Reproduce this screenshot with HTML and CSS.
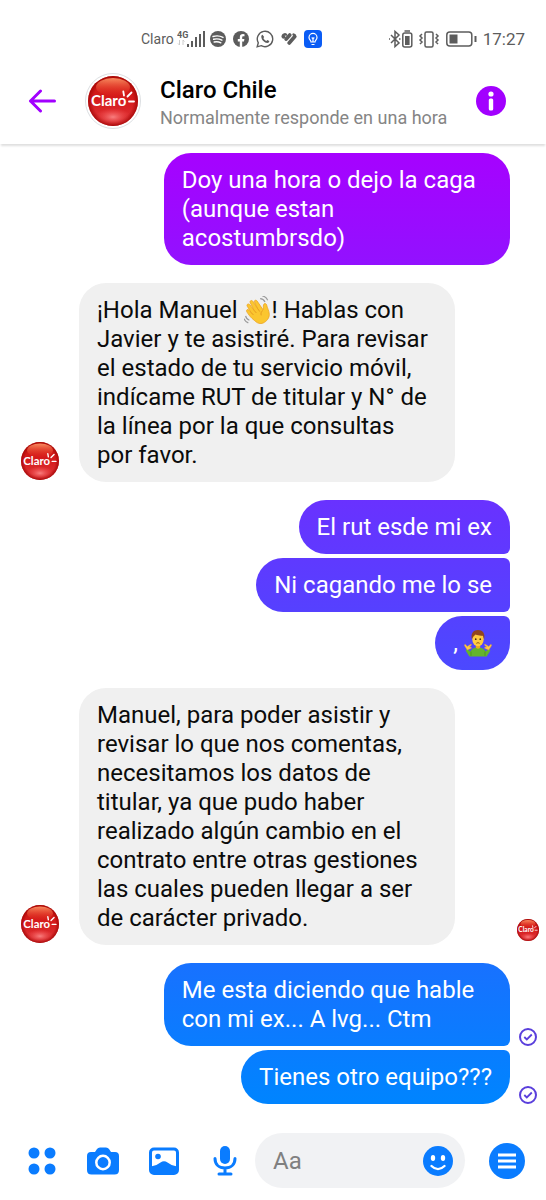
FILE: index.html
```html
<!DOCTYPE html>
<html lang="es">
<head>
<meta charset="utf-8">
<meta name="viewport" content="width=device-width, initial-scale=1">
<title>Claro Chile</title>
<link rel="stylesheet" href="styles.css">
</head>
<body>
<svg class="defs" aria-hidden="true">
  <defs>
    <linearGradient id="ball" x1="0" y1="0" x2="0" y2="1">
      <stop offset="0" stop-color="#c8180f"/><stop offset=".45" stop-color="#d51a1c"/><stop offset=".75" stop-color="#da2a2c"/><stop offset="1" stop-color="#c41216"/>
    </linearGradient>
    <radialGradient id="rim"><stop offset=".8" stop-color="#900" stop-opacity="0"/><stop offset="1" stop-color="#900" stop-opacity=".7"/></radialGradient>
    <linearGradient id="shine" x1="0" y1="0" x2="0" y2="1"><stop offset="0" stop-color="#ff9a6a" stop-opacity=".9"/><stop offset="1" stop-color="#ee3322" stop-opacity=".1"/></linearGradient>
    <radialGradient id="glow"><stop offset="0" stop-color="#ff8f8f" stop-opacity=".85"/><stop offset="1" stop-color="#ff5555" stop-opacity="0"/></radialGradient>
    <symbol id="claro" viewBox="0 0 50 50">
      <circle cx="25" cy="25" r="25" fill="url(#ball)"/>
      <circle cx="25" cy="25" r="25" fill="url(#rim)"/>
      <ellipse cx="25" cy="11" rx="17" ry="9" fill="url(#shine)"/>
      <ellipse cx="25" cy="41" rx="18" ry="9" fill="url(#glow)"/>
      <text x="3" y="30" class="logo-word">Claro</text>
      <path d="M36 19.500l-.7-4M39.500 20.500l4-4M41 25.500h5" stroke="#fff" stroke-width="1.800" stroke-linecap="round"/>
    </symbol>
    <symbol id="check" viewBox="0 0 18 18">
      <circle cx="9" cy="9" r="8" fill="none" stroke="#5a3fdc" stroke-width="2"/>
      <path d="M5.300 9l2.500 2.500 5-5" fill="none" stroke="#5a3fdc" stroke-width="1.800"/>
    </symbol>
  </defs>
</svg>

<div class="phone">
  <div class="status">
    <div class="status-group">
      <span class="carrier">Claro</span>
      <svg width="28" height="20" viewBox="0 0 28 20" fill="#5c5c5c" aria-label="4G">
        <text x="0" y="9" class="net">4G</text>
        <path d="M2.500 11v5M6 11v5M1 14.500l1.500 1.500M6 11l1.500 1.500" stroke="#ccc" fill="none"/>
        <path d="M10 15h2v3h-2zM14 12h2v6h-2zM18 8h2v10h-2zM22 5h2v13h-2zM26 2h2v16h-2z"/>
      </svg>
      <svg class="gap-l" width="16" height="16" viewBox="0 0 16 16"><circle cx="8" cy="8" r="8" fill="#5c5c5c"/><path d="M3 5.500c3.500-1 7-.7 10 .9M3.600 8.300c3-.8 5.800-.4 8.300.9M4.200 11c2.500-.6 4.600-.3 6.700.8" fill="none" stroke="#fff" stroke-width="1.400" stroke-linecap="round"/></svg>
      <svg class="gap-m" width="16" height="16" viewBox="0 0 16 16"><circle cx="8" cy="8" r="8" fill="#5c5c5c"/><path d="M6.800 16v-5.600h-2V8h2V6.400c0-2.200 1.200-3.300 3.200-3.300l1.500.1v2h-1c-1 0-1.300.5-1.300 1.200V8h2.200l-.4 2.400H9.200V16z" fill="#fff"/></svg>
      <svg class="gap-m" width="18" height="18" viewBox="0 0 18 18"><path d="M1.200 16.800l1.100-4A7.700 7.700 0 1 1 5.200 15.700z" fill="none" stroke="#5c5c5c" stroke-width="1.400"/><path d="M6.500 4.800c-.8.300-1.300 1.100-1.200 2.200.3 3 3.300 5.800 6 6 1.200 0 2-.7 2-1.900l-2-1-.9 1c-1.500-.6-2.500-1.700-3-3l.8-1z" fill="#5c5c5c"/></svg>
      <svg class="gap-m" width="16" height="16" viewBox="0 0 16 16" fill="none" stroke="#5c5c5c" stroke-width="3.600" stroke-linecap="round"><path d="M2.300 5.500l.2.300M5.200 8.200L8.800 4M8.200 12l5.600-6.500"/><path d="M2 4.500c.8-1.300 2.200-1.500 3-.8M12.500 3.500l1.300.8" stroke-width="2.400"/></svg>
      <svg class="gap-m" width="18" height="18" viewBox="0 0 18 18"><rect width="18" height="18" rx="4" fill="#0a5cf5"/><path d="M7 12c0-1.500-2-2.300-2-4.600a4 4 0 0 1 8 0c0 2.300-2 3.100-2 4.600zM7.500 14.500h3M9 12V8.500M7.700 7.500L9 8.700l1.300-1.200" fill="none" stroke="#fff" stroke-width="1.200"/></svg>
    </div>
    <div class="status-group">
      <svg width="88" height="20" viewBox="0 0 88 20" fill="none" stroke="#5c5c5c" stroke-width="1.500">
        <path d="M2 6l8 8-4 3.500v-15L10 6l-8 8M0 10h1M10 10h1.500"/>
        <rect x="13.800" y="4" width="9" height="14" rx="2"/><path d="M15.500 2h5.500"/><path d="M16 7h4.600v9H16z" fill="#5c5c5c" stroke="none"/>
        <rect x="36" y="3" width="8" height="15" rx="1.500"/><path d="M33 5l-2 2 2 2-2 2 2 2-2 2M47 5l2 2-2 2 2 2-2 2 2 2"/>
        <rect x="57.800" y="3" width="25" height="14" rx="3"/><path d="M60.500 5.500h8v9h-8z" fill="#5c5c5c" stroke="none"/><path d="M86.500 7v6" stroke-width="2"/>
      </svg>
      <span class="clock">17:27</span>
    </div>
  </div>

  <header class="header">
    <button class="icon-btn back" aria-label="Volver">
      <svg width="28" height="24" viewBox="0 0 28 24" fill="none" stroke="#a200ff" stroke-width="3" stroke-linecap="round" stroke-linejoin="round"><path d="M2.500 12h24M12.500 2l-10 10 10 10"/></svg>
    </button>
    <div class="avatar-ring"><svg class="avatar-lg" role="img" aria-label="Claro"><use href="#claro"/></svg></div>
    <div class="who">
      <h1 class="name">Claro Chile</h1>
      <p class="reply-time">Normalmente responde en una hora</p>
    </div>
    <button class="icon-btn" aria-label="Información">
      <svg width="30" height="30" viewBox="0 0 30 30"><circle cx="15" cy="15" r="15" fill="#a200ff"/><circle cx="15" cy="8" r="2.600" fill="#fff"/><rect x="12.800" y="12.500" width="4.400" height="12" rx="1.500" fill="#fff"/></svg>
    </button>
  </header>

  <main class="chat">
    <div class="group">
      <div class="row sent"><p class="bubble">Doy una hora o dejo la caga (aunque estan acostumbrsdo)</p><span class="receipt"></span></div>
    </div>
    <div class="group">
      <div class="row received">
        <svg class="avatar" role="img" aria-label="Claro"><use href="#claro"/></svg>
        <p class="bubble">¡Hola Manuel <svg class="emoji" viewBox="0 0 26 26" role="img" aria-label="👋"><path d="M10 23C6 20 4 17 2.500 14.500c-.8-1.600 1-2.700 2.200-1.300l2.500 3L3 9.500c-1-1.700 1.200-3 2.400-1.400l4.100 5.400L5.800 6.300c-.9-1.800 1.300-3 2.500-1.300l4.400 6.800-2.900-6c-.8-1.700 1.400-2.700 2.400-1.100l5.500 8.100c.5-2.500-.1-4.500 1-5.500 1-.8 2.200 0 2.400 1.200.4 2.500 2.300 5 2.400 8.500.1 3.600-2.500 6.500-5.500 8-3 1.300-5.500.4-8-2z" fill="#fbc62f" stroke="#eba01f" stroke-width=".7"/><path d="M7.300 16l1.500 1.700M9.500 13.500l2 2.300M12.700 11.800l2 2.700M17.500 13.500c-1.800 1-2 2.800-1.500 4.500" fill="none" stroke="#e59b1f" stroke-width=".9"/><path d="M15 2.500c2 0 3.600 1.200 4.500 3M17 0c2.300.3 4 1.700 5 4M1.500 18.500c.4 2 1.700 3.400 3.500 4M0 21c.8 2 2 3.200 4 4" fill="none" stroke="#9a9a9a" stroke-width="1.100"/></svg>! Hablas con Javier y te asistiré. Para revisar el estado de tu servicio móvil, indícame RUT de titular y N° de la línea por la que consultas por favor.</p>
        <span class="receipt"></span>
      </div>
    </div>
    <div class="group">
      <div class="row sent"><p class="bubble">El rut esde mi ex</p><span class="receipt"></span></div>
      <div class="row sent"><p class="bubble">Ni cagando me lo se</p><span class="receipt"></span></div>
      <div class="row sent"><p class="bubble">, <svg class="emoji" viewBox="0 0 26 26" role="img" aria-label="🤷‍♂️"><path d="M3 18.500l3 2.500c1-2.500 3.500-4 7-4s6 1.500 7 4l3-2.500 1.500 1.500-3.500 5.500H5L1.500 20z" fill="#64b32f"/><path d="M6.500 21v4M19.500 21v4" stroke="#4b9422" stroke-width=".8"/><path d="M3 19.500l-2.500-4c-.4-1 .6-1.500 1.200-.7l1.300 1.500 3-2c.9-.4 1.300.4.600 1l-1.600 1.400 1.500.3c.7.3.5 1-.2 1.100zM23 19.500l2.500-4c.4-1-.6-1.500-1.200-.7l-1.300 1.500-3-2c-.9-.4-1.300.4-.6 1l1.600 1.400-1.500.3c-.7.3-.5 1 .2 1.100z" fill="#ffca45" stroke="#eaa42a" stroke-width=".4"/><path d="M11 14h4v3.500c-1.200 1.200-2.800 1.200-4 0z" fill="#e9a825"/><ellipse cx="13" cy="9.500" rx="5.300" ry="6.500" fill="#ffcc3f"/><path d="M7.300 9.500C6 4 9 1 13 1s7 3 5.700 8.500c-.6-1-.8-2.300-1-3.300-3 .3-5-.2-6.900-1C9.300 6.200 8.200 7.500 7.300 9.500z" fill="#91461f"/><circle cx="10.900" cy="9.500" r=".8" fill="#4b2b17"/><circle cx="15.100" cy="9.500" r=".8" fill="#4b2b17"/><path d="M11.500 13.300c.9-.7 2.100-.7 3 0" fill="none" stroke="#6d3c17" stroke-width=".8"/></svg></p><span class="receipt"></span></div>
    </div>
    <div class="group">
      <div class="row received">
        <svg class="avatar" role="img" aria-label="Claro"><use href="#claro"/></svg>
        <p class="bubble">Manuel, para poder asistir y revisar lo que nos comentas, necesitamos los datos de titular, ya que pudo haber realizado algún cambio en el contrato entre otras gestiones las cuales pueden llegar a ser de carácter privado.</p>
        <span class="receipt"><svg class="seen" role="img" aria-label="Visto"><use href="#claro"/></svg></span>
      </div>
    </div>
    <div class="group">
      <div class="row sent"><p class="bubble">Me esta diciendo que hable con mi ex... A lvg... Ctm</p><span class="receipt"><svg class="tick" role="img" aria-label="Enviado"><use href="#check"/></svg></span></div>
      <div class="row sent"><p class="bubble">Tienes otro equipo???</p><span class="receipt"><svg class="tick" role="img" aria-label="Enviado"><use href="#check"/></svg></span></div>
    </div>
  </main>

  <form class="composer">
    <div class="tools">
      <button type="button" class="icon-btn tool" aria-label="Más">
        <svg width="28" height="28" viewBox="0 0 28 28" fill="#0a7cff"><circle cx="6" cy="6" r="5.500"/><circle cx="22" cy="6" r="5.500"/><circle cx="6" cy="22" r="5.500"/><circle cx="22" cy="22" r="5.500"/></svg>
      </button>
      <button type="button" class="icon-btn tool" aria-label="Cámara">
        <svg width="34" height="28" viewBox="0 0 34 28"><path d="M5 5h4l2-3q1-1.500 3-1.500h6q2 0 3 1.500l2 3h4q4 0 4 4v14q0 4.500-4.500 4.500h-23Q1 27.500 1 23V9q0-4 4-4z" fill="#0a7cff"/><circle cx="17" cy="15.500" r="6.700" fill="#0a7cff" stroke="#fff" stroke-width="2.500"/></svg>
      </button>
      <button type="button" class="icon-btn tool" aria-label="Galería">
        <svg width="30" height="28" viewBox="0 0 30 28"><rect x="1.500" y="2" width="27" height="24.500" rx="3.500" fill="none" stroke="#0a7cff" stroke-width="3"/><circle cx="9" cy="9.500" r="2.800" fill="#0a7cff"/><path d="M2 19.500q6-1 9.500-4 3.500-2.500 7 0 3.500 3 9.500 4v7H2z" fill="#0a7cff"/></svg>
      </button>
      <button type="button" class="icon-btn tool" aria-label="Micrófono">
        <svg width="24" height="30" viewBox="0 0 24 30" fill="none" stroke="#0a7cff" stroke-width="3" stroke-linecap="round"><rect x="7" y="0" width="10" height="18" rx="5" fill="#0a7cff" stroke="none"/><path d="M2 12.500c0 6 4 9.500 10 9.500s10-3.500 10-9.500M12 22v5M6 28h12"/></svg>
      </button>
    </div>
    <div class="field">
      <input class="text" type="text" placeholder="Aa" aria-label="Mensaje">
      <button type="button" class="icon-btn" aria-label="Emoji">
        <svg width="30" height="30" viewBox="0 0 30 30"><circle cx="15" cy="15" r="15" fill="#0a7cff"/><ellipse cx="10" cy="12" rx="2.200" ry="2.900" fill="#fff"/><ellipse cx="20" cy="12" rx="2.200" ry="2.900" fill="#fff"/><path d="M8.500 20c4 4 9 4 13 0" fill="none" stroke="#fff" stroke-width="2.400" stroke-linecap="round"/></svg>
      </button>
    </div>
    <button type="button" class="icon-btn menu" aria-label="Menú">
      <svg width="36" height="36" viewBox="0 0 36 36"><circle cx="18" cy="18" r="18" fill="#0a7cff"/><path d="M9 12h18M9 18h18M9 24h18" stroke="#fff" stroke-width="3"/></svg>
    </button>
  </form>
</div>
</body>
</html>
```
FILE: styles.css
```css
* { box-sizing: border-box; }

body {
  margin: 0;
  background: #fff;
  color: #0b0b0b;
  font-family: Roboto, "Liberation Sans", sans-serif;
}

h1, p { margin: 0; }
svg { display: block; flex: none; }
.defs { position: absolute; width: 0; height: 0; }

.logo-word { font: 700 15px Lato, sans-serif; fill: #fff; }
.net { font: 700 9px Roboto, sans-serif; }

.phone {
  display: flex;
  flex-direction: column;
  min-height: 100vh;
}

/* Status bar */
.status {
  display: flex;
  justify-content: space-between;
  padding: 24px 21px 0 141px;
  height: 60px;
  color: #5c5c5c;
}
.status-group { display: flex; align-items: center; height: 30px; }
.carrier { font-size: 14px; margin-right: 3px; }
.gap-l { margin-left: 5px; }
.gap-m { margin-left: 7px; }
.clock { font-size: 17px; margin-left: 6px; }

/* Header */
.icon-btn {
  display: flex;
  align-items: center;
  justify-content: center;
  flex: none;
  padding: 0;
  border: 0;
  background: none;
}
.header {
  display: flex;
  align-items: center;
  height: 84px;
  padding: 0 40px 2px 28px;
  box-shadow: 0 3px 2px -1px rgba(0, 0, 0, .13);
}
.avatar-ring {
  margin-left: 29px;
  padding: 2px;
  border: 1px solid #dcdfe2;
  border-radius: 50%;
}
.avatar-lg { width: 50px; height: 50px; }
.who { flex: 1; margin-left: 19px; padding-top: 4px; }
.name { font-size: 24px; font-weight: 500; line-height: 30px; color: #000; }
.reply-time { font-size: 18px; line-height: 26px; color: #858585; white-space: nowrap; }

/* Conversation */
.chat {
  flex: 1;
  display: flex;
  flex-direction: column;
  gap: 18px;
  padding: 9px 0 20px;
}
.group { display: flex; flex-direction: column; gap: 4px; }
.row { display: flex; align-items: flex-end; }
.sent { justify-content: flex-end; padding-left: 30%; }
.received { padding-left: 21px; }
.received .receipt { margin-left: auto; padding-bottom: 4px; }
.bubble {
  padding: 13px 18px 12px;
  border-radius: 27px;
  font-size: 24px;
  line-height: 29px;
}
.sent .bubble {
  color: #fff;
  background: linear-gradient(#a800ff 140px, #0084ff 1100px) fixed;
}
.sent:not(:first-child) .bubble { border-top-right-radius: 6px; }
.sent:not(:last-child) .bubble { border-bottom-right-radius: 6px; }
.received .bubble {
  max-width: 376px;
  margin-left: 20px;
  padding-right: 24px;
  background: #f0f0f0;
}
.avatar { width: 38px; height: 38px; margin-bottom: 2px; }
.receipt {
  display: flex;
  justify-content: center;
  flex: none;
  width: 36px;
}
.tick { width: 18px; height: 18px; }
.seen { width: 22px; height: 22px; }
.emoji { display: inline-block; width: 28px; height: 28px; vertical-align: -2px; margin: -4px 0; }

/* Composer */
.composer {
  display: flex;
  align-items: center;
  padding: 0 21px 12px 24px;
}
.tools { display: flex; gap: 25px; margin-right: 12px; }
.tool { width: 36px; height: 36px; }
.field {
  display: flex;
  align-items: center;
  flex: 1;
  min-width: 0;
  height: 55px;
  padding: 0 12px 0 18px;
  border-radius: 28px;
  background: #f1f2f4;
}
.text {
  flex: 1;
  width: 100%;
  min-width: 0;
  padding: 0;
  border: 0;
  outline: 0;
  background: none;
  font: 24px Roboto, sans-serif;
  color: #0b0b0b;
}
.text::placeholder { color: #808080; opacity: 1; }
.menu { margin-left: 24px; }
```
